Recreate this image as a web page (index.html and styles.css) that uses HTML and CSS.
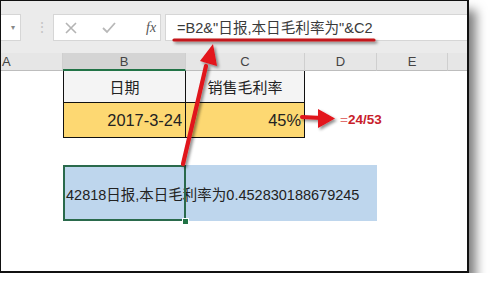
FILE: index.html
```html
<!DOCTYPE html>
<html lang="zh-CN">
<head>
    <meta charset="UTF-8">
    <title>Formula</title>
    <link rel="stylesheet" href="styles.css">
</head>
<body>
    <div class="window">
        <!-- formula bar -->
        <div class="toolbar">
            <div class="namebox"><span class="drop">&#9662;</span></div>
            <div class="dots">&#8942;</div>
            <div class="fxbox">
                <svg class="icon" width="12" height="12" viewBox="0 0 12 12"><path d="M1 1 L11 11 M11 1 L1 11" stroke="#b4b4b4" stroke-width="1.6" fill="none"/></svg>
                <svg class="icon" width="14" height="12" viewBox="0 0 14 12"><path d="M1 6 L5 10 L13 1" stroke="#b8b8b8" stroke-width="1.8" fill="none"/></svg>
                <span class="fx">fx</span>
            </div>
            <div class="formula">=B2&amp;"日报,本日毛利率为"&amp;C2</div>
        </div>

        <!-- column headers -->
        <div class="colheads">
            <div class="head col-a">A</div>
            <div class="head col-b active">B</div>
            <div class="head col-c">C</div>
            <div class="head col-d">D</div>
            <div class="head col-e">E</div>
            <div class="head col-f"></div>
        </div>

        <!-- sheet rows -->
        <div class="row row1">
            <div class="cell col-a"></div>
            <div class="cell col-b boxed first title">日期</div>
            <div class="cell col-c boxed title">销售毛利率</div>
        </div>
        <div class="row row2">
            <div class="cell col-a"></div>
            <div class="cell col-b boxed first yellow num">2017-3-24</div>
            <div class="cell col-c boxed yellow num">45%</div>
        </div>
        <div class="row row3"></div>
        <div class="row row4">
            <div class="cell col-a"></div>
            <div class="spill">42818日报,本日毛利率为0.452830188679245</div>
        </div>

        <div class="note">=<b>24/53</b></div>

        <!-- red arrows drawn over the sheet -->
        <svg class="marks" width="490" height="294" viewBox="0 0 490 294">
            <defs>
                <filter id="sh" x="-20%" y="-20%" width="140%" height="140%">
                    <feDropShadow dx="2" dy="2" stdDeviation="1.4" flood-color="#000" flood-opacity="0.45"/>
                </filter>
            </defs>
            <g filter="url(#sh)">
                <line x1="174" y1="40" x2="374" y2="40" stroke="#c4161c" stroke-width="3.2" stroke-linecap="round"/>
                <line x1="183" y1="164" x2="206" y2="66" stroke="#e0141b" stroke-width="4.2" stroke-linecap="round"/>
                <polygon points="213,44 200,61 217,66" fill="#e3121a"/>
                <line x1="302" y1="117" x2="322" y2="118" stroke="#e0141b" stroke-width="4" stroke-linecap="round"/>
                <polygon points="318,109 335,118.5 318,128" fill="#e3121a"/>
            </g>
        </svg>
    </div>
</body>
</html>
```

FILE: styles.css
```css
/* page and window frame */
body {
    margin: 0;
    background-color: #fff;
    font-family: "Liberation Sans", "Noto Sans CJK SC", sans-serif;
}

.window {
    position: relative;
    width: 469px;
    height: 273px;
    box-sizing: border-box;
    border: 1px solid #111;
    border-right-width: 2px;
    border-bottom-width: 2px;
    background-color: #fff;
    box-shadow: 7px 10px 10px rgba(0, 0, 0, 0.5);
}

/* formula bar */
.toolbar {
    display: flex;
    align-items: flex-start;
    height: 52px;
    box-sizing: border-box;
    padding-top: 13px;
    background-color: #ebebeb;
}

.namebox {
    width: 20px;
    height: 27px;
    box-sizing: border-box;
    background-color: #fff;
    border: 1px solid #d6d6d6;
    border-left: none;
    display: flex;
    align-items: center;
    justify-content: flex-end;
    padding-right: 5px;
}

.drop {
    font-size: 8px;
    color: #888;
}

.dots {
    margin-left: 14px;
    width: 6px;
    height: 27px;
    line-height: 27px;
    font-size: 14px;
    color: #c4c4c4;
}

.fxbox {
    margin-left: 12px;
    width: 108px;
    height: 27px;
    box-sizing: border-box;
    background-color: #fff;
    border: 1px solid #d6d6d6;
    display: flex;
    align-items: center;
    padding-left: 11px;
    gap: 24px;
}

.fxbox .icon + .icon {
    margin-left: 1px;
}

.fx {
    margin-left: 6px;
    font-family: "Liberation Serif", serif;
    font-style: italic;
    font-size: 14px;
    color: #555;
}

.formula {
    flex: 1;
    margin-left: 4px;
    height: 27px;
    box-sizing: border-box;
    background-color: #fff;
    border: 1px solid #d6d6d6;
    border-right: none;
    padding-left: 11px;
    line-height: 26px;
    font-size: 14.6px;
    color: #3a3a3a;
    white-space: nowrap;
}

/* column headers */
.colheads {
    display: flex;
    height: 18px;
}

.head {
    height: 18px;
    box-sizing: border-box;
    background-color: #e6e6e6;
    border-right: 1px solid #cfcfcf;
    border-bottom: 1px solid #bdbdbd;
    text-align: center;
    line-height: 17px;
    font-size: 13px;
    color: #444;
}

.head.col-a {
    text-align: left;
    padding-left: 1px;
}

.head.active {
    background-color: #d4d4d4;
    border-bottom: 2px solid #217346;
}

.head.col-f {
    flex: 1;
    border-right: none;
}

.col-a { width: 62px; }
.col-b { width: 123px; }
.col-c { width: 119px; }
.col-d { width: 72px; }
.col-e { width: 71px; }

/* sheet rows */
.row {
    display: flex;
}

.row1 { height: 32px; }
.row2 { height: 35px; }
.row3 { height: 27px; }
.row4 { height: 56px; }

.cell {
    height: 100%;
    box-sizing: border-box;
}

.boxed {
    border-right: 1px solid #111;
    border-bottom: 1px solid #111;
}

.boxed.first {
    border-left: 1px solid #111;
}

.title {
    background-color: #f4f4f4;
    display: flex;
    align-items: center;
    justify-content: center;
    font-size: 15px;
    color: #222;
}

.yellow {
    background-color: #fdd872;
}

.num {
    display: flex;
    align-items: center;
    justify-content: flex-end;
    padding-right: 3px;
    font-size: 16.4px;
    color: #222;
}

/* overflowing text in the selected row */
.spill {
    position: relative;
    width: 314px;
    height: 56px;
    background-color: #bed6ed;
    display: flex;
    align-items: center;
    padding-left: 3px;
    box-sizing: border-box;
    font-size: 14.5px;
    color: #222;
    white-space: nowrap;
}

.spill::before {
    content: "";
    position: absolute;
    left: 0;
    top: 0;
    width: 123px;
    height: 56px;
    box-sizing: border-box;
    border: 2px solid #2a6a4c;
}

.spill::after {
    content: "";
    position: absolute;
    left: 119px;
    top: 53px;
    width: 5px;
    height: 5px;
    background-color: #217346;
    border: 1px solid #fff;
}

/* annotation next to the arrow */
.note {
    position: absolute;
    left: 339px;
    top: 111px;
    font-size: 13.5px;
    color: #e07070;
}

.note b {
    color: #c8202a;
}

.marks {
    position: absolute;
    left: -1px;
    top: -1px;
    pointer-events: none;
}
```
